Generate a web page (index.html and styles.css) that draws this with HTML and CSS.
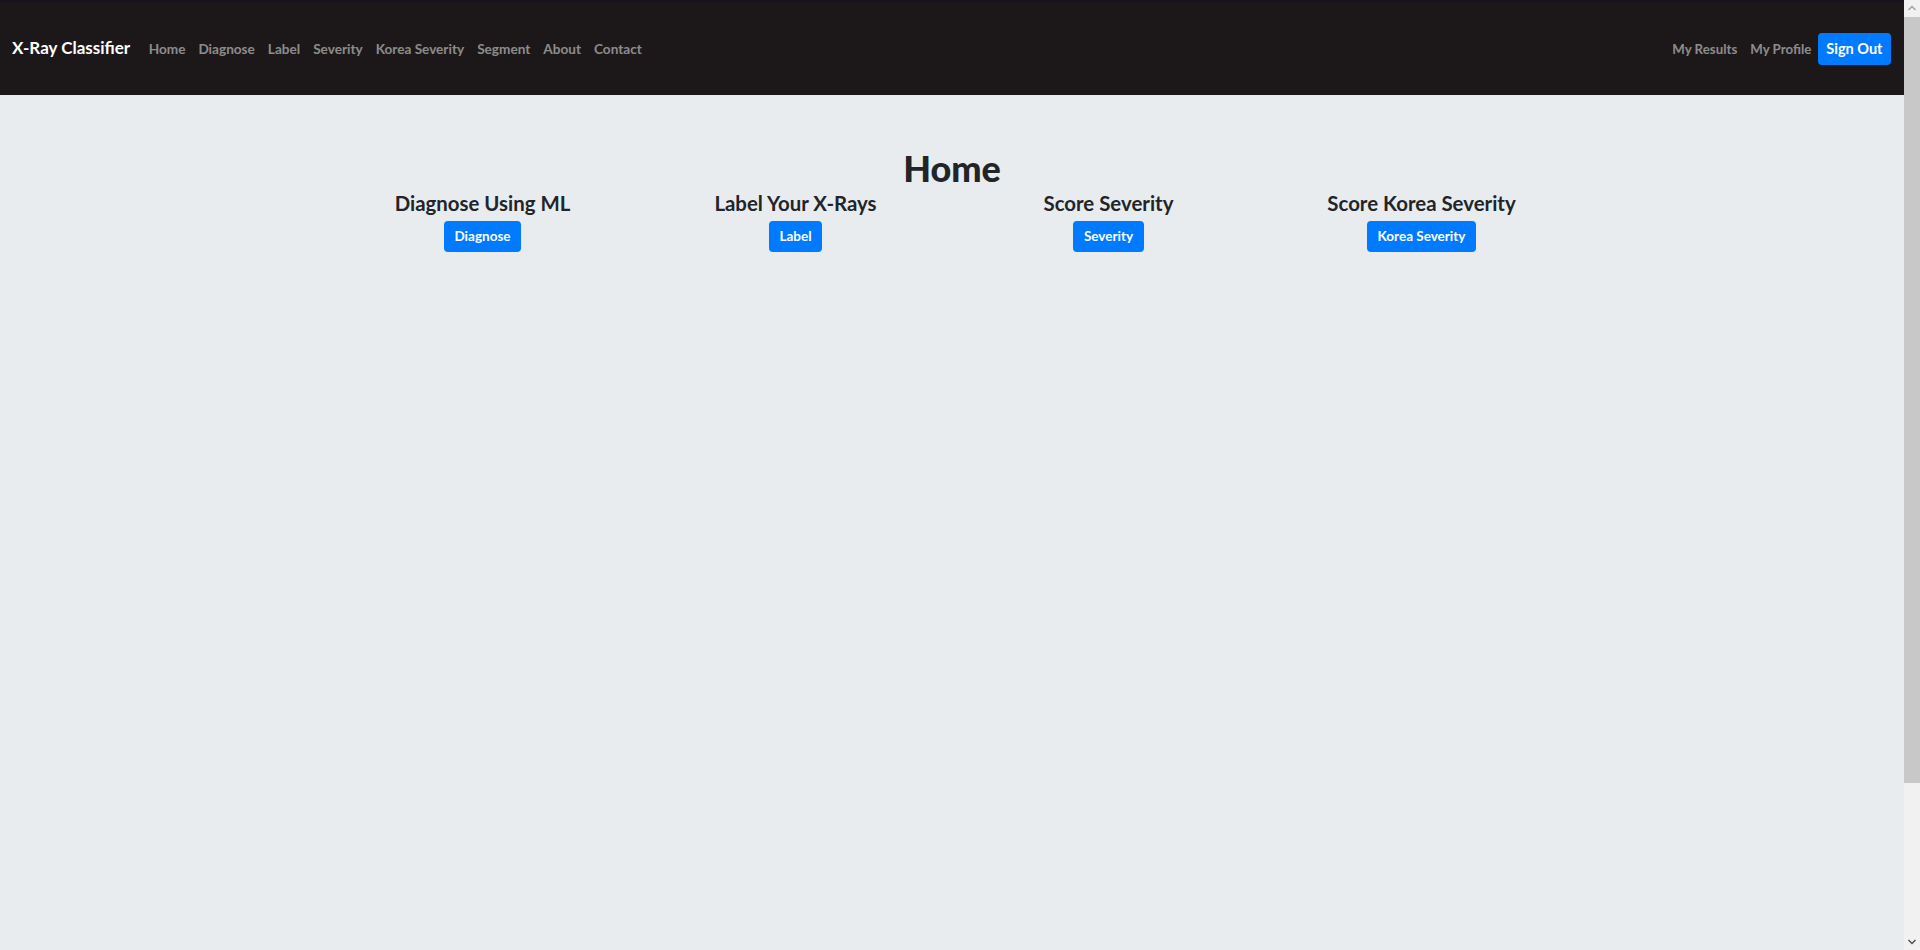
FILE: index.html
```html
<!DOCTYPE html>
<html lang="en">
<head>
<meta charset="utf-8">
<title>X-Ray Classifier</title>
<link rel="stylesheet" href="styles.css">
</head>
<body>
<nav class="navbar">
  <a class="brand" href="#">X-Ray Classifier</a>
  <ul class="nav-links">
    <li><a href="#">Home</a></li>
    <li><a href="#">Diagnose</a></li>
    <li><a href="#">Label</a></li>
    <li><a href="#">Severity</a></li>
    <li><a href="#">Korea Severity</a></li>
    <li><a href="#">Segment</a></li>
    <li><a href="#">About</a></li>
    <li><a href="#">Contact</a></li>
  </ul>
  <div class="nav-right">
    <a href="#">My Results</a>
    <a href="#">My Profile</a>
    <a class="btn btn-signout" href="#">Sign Out</a>
  </div>
</nav>
<main class="content">
  <h1 class="title">Home</h1>
  <div class="features">
    <div class="feature">
      <h3>Diagnose Using ML</h3>
      <a class="btn btn-sm" href="#">Diagnose</a>
    </div>
    <div class="feature">
      <h3>Label Your X-Rays</h3>
      <a class="btn btn-sm" href="#">Label</a>
    </div>
    <div class="feature">
      <h3>Score Severity</h3>
      <a class="btn btn-sm" href="#">Severity</a>
    </div>
    <div class="feature">
      <h3>Score Korea Severity</h3>
      <a class="btn btn-sm" href="#">Korea Severity</a>
    </div>
  </div>
</main>
<div class="scrollbar" aria-hidden="true">
  <div class="sb-arrow sb-up"><svg width="16" height="17" viewBox="0 0 16 17"><path d="M4.5 10 L8 6.5 L11.5 10" fill="none" stroke="#a3a3a3" stroke-width="1.5"/></svg></div>
  <div class="sb-track"><div class="sb-thumb"></div></div>
  <div class="sb-arrow sb-down"><svg width="16" height="17" viewBox="0 0 16 17"><path d="M4.5 7 L8 10.5 L11.5 7" fill="none" stroke="#505050" stroke-width="1.5"/></svg></div>
</div>
</body>
</html>
```
FILE: styles.css
```css
* { box-sizing: border-box; }
html, body { margin: 0; padding: 0; }
html { background: #e8ecef; }
body {
  font-family: Lato, "Liberation Sans", sans-serif;
  background: #e8ecef;
  color: #212529;
  min-height: 1134px;
  padding-right: 16px;
}
a { text-decoration: none; }
.navbar {
  height: 95px;
  background: #1c1819;
  border-top: 2px solid #17141f;
  display: flex;
  align-items: center;
  padding: 0 12px;
}
.brand {
  color: #fff;
  font-weight: 700;
  font-size: 17px;
  margin-right: 12px;
  padding-bottom: 2px;
}
.nav-links {
  list-style: none;
  display: flex;
  margin: 0;
  padding: 0;
  flex: 1;
}
.nav-links a, .nav-right a:not(.btn) {
  display: block;
  color: rgba(255,255,255,0.5);
  font-size: 13.6px;
  font-weight: 700;
  padding: 0 6.5px;
}
.nav-right a:not(.btn) {
  font-size: 13.3px;
}
.nav-right {
  display: flex;
  align-items: center;
}
.btn {
  display: inline-block;
  background: #007bff;
  color: #fff;
  font-weight: 700;
  border-radius: 4px;
}
.btn-signout {
  font-size: 14.5px;
  height: 32px;
  line-height: 32px;
  padding: 0 8.5px;
  margin-left: 0;
  margin-right: 1px;
}
.content {
  padding-top: 51px;
  text-align: center;
}
.title {
  margin: 0;
  font-size: 36px;
  font-weight: 900;
  line-height: 44px;
}
.features {
  width: 1252px;
  margin: 0 auto;
  display: grid;
  grid-template-columns: repeat(4, 1fr);
}
.feature {
  display: flex;
  flex-direction: column;
  align-items: center;
}
.feature h3 {
  margin: 0 0 4px;
  font-size: 20.4px;
  font-weight: 700;
  line-height: 27px;
}
.btn-sm {
  font-size: 13.5px;
  height: 31px;
  line-height: 31px;
  padding: 0 10.5px;
}
.scrollbar {
  position: fixed;
  top: 0;
  right: 0;
  width: 16px;
  height: 100vh;
  background: #f1f1f1;
  display: flex;
  flex-direction: column;
}
.sb-arrow { height: 17px; flex: none; }
.sb-arrow svg { display: block; }
.sb-track { flex: 1; }
.sb-thumb {
  height: 766px;
  background: #c8c8c8;
}
```
